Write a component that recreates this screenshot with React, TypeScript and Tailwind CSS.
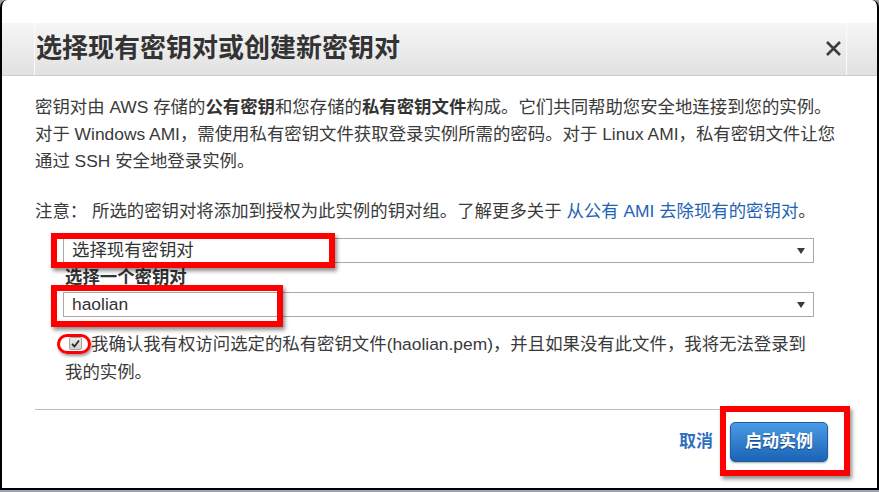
import React from "react";

const FONT = {
  fontFamily: '"Liberation Sans", "Noto Sans CJK SC", sans-serif',
};

function Arrow() {
  return (
    <svg width="8" height="6" viewBox="0 0 8 6" className="shrink-0">
      <path d="M0 0 L8 0 L4 6 Z" fill="#3a3a3a" />
    </svg>
  );
}

function Select({ value }: { value: string }) {
  return (
    <div className="h-[25px] border border-[#a9a9a9] bg-white flex items-center justify-between pl-[8px] pr-[8px] text-[17.4px] text-[#333] leading-none">
      <span>{value}</span>
      <Arrow />
    </div>
  );
}

export default function App() {
  return (
    <div
      className="relative w-[879px] h-[492px] bg-[#9aa3ab] overflow-hidden"
      style={FONT}
    >
      <div className="w-[879px] h-[490px] border-x-2 border-b-2 border-black rounded-t-[7px] bg-white pt-[23px] flex flex-col">
        {/* header */}
        <div className="h-[53px] shrink-0 border-b border-[#cccccc] bg-linear-to-b from-[#f6f6f6] to-[#e1e1e1]">
          <div className="ml-[32px] w-[813px] h-full border-l border-r border-[#fbfbfb] flex items-center justify-between pr-[4px]">
            <h1 className="text-[26px] font-bold text-[#333] leading-none pl-[1px] -mt-[2px]">
              选择现有密钥对或创建新密钥对
            </h1>
            <svg width="17" height="17" viewBox="0 0 17 17" className="-mt-[1px]">
              <path
                d="M2 2 L15 15 M15 2 L2 15"
                stroke="#3d3d3d"
                strokeWidth="2.6"
                strokeLinecap="butt"
              />
            </svg>
          </div>
        </div>

        {/* body */}
        <div className="pl-[33px] pr-[31px] text-[17.4px] text-[#3a3a3a] flex flex-col">
          <p className="mt-[18px] leading-[27px] whitespace-nowrap">
            密钥对由 AWS 存储的<b className="text-[#333]">公有密钥</b>和您存储的
            <b className="text-[#333]">私有密钥文件</b>构成。它们共同帮助您安全地连接到您的实例。
            <br />
            对于 Windows AMI，需使用私有密钥文件获取登录实例所需的密码。对于 Linux AMI，私有密钥文件让您
            <br />
            通过 SSH 安全地登录实例。
          </p>
          <p className="mt-[23px] leading-[27px] whitespace-nowrap">
            注意： 所选的密钥对将添加到授权为此实例的钥对组。了解更多关于{" "}
            <span className="text-[#1f63b3]">从公有 AMI 去除现有的密钥对</span>。
          </p>

          <div className="mt-[13px] ml-[28px] w-[751px] flex flex-col">
            <Select value="选择现有密钥对" />
            <div className="h-[29px] leading-[29px] font-bold text-[#333] pl-[2px]">
              选择一个密钥对
            </div>
            <Select value="haolian" />
            <p className="mt-[13px] leading-[28px] pl-[2px] whitespace-nowrap">
              <span className="inline-flex align-middle ml-[4px] mr-[9px] -mt-[4px] w-[13px] h-[13px] border border-[#a5a5a5] rounded-[2px] bg-linear-to-b from-[#ececec] to-[#d2d2d2] items-center justify-center">
                <svg width="9" height="9" viewBox="0 0 9 9">
                  <path
                    d="M1 5 L3.5 7.5 L8 1.5"
                    stroke="#2a2a2a"
                    strokeWidth="1.8"
                    fill="none"
                  />
                </svg>
              </span>
              我确认我有权访问选定的私有密钥文件(haolian.pem)，并且如果没有此文件，我将无法登录到
              <br />
              我的实例。
            </p>
          </div>

          <div className="mt-[23px] h-px bg-[#bdbdbd]" />

          <div className="flex justify-end items-center pt-[12px] pr-[18px]">
            <span className="font-bold text-[17px] text-[#2f6fc2] mr-[17px]">取消</span>
            <button className="h-[40px] w-[98px] rounded-[5px] border border-[#1c5ea8] bg-linear-to-b from-[#4b9be6] to-[#1a63b6] text-white font-bold text-[17px] shadow-[0_1px_2px_rgba(0,0,0,0.35)] [text-shadow:0_1px_1px_rgba(0,0,0,0.4)]">
              启动实例
            </button>
          </div>
        </div>
      </div>

      {/* red annotation overlays */}
      <div className="absolute left-[51px] top-[233px] w-[284px] h-[35px] border-[6px] border-[#ff0000] shadow-[2px_3px_4px_rgba(0,0,0,0.45)]" />
      <div className="absolute left-[51px] top-[285px] w-[232px] h-[42px] border-[6px] border-[#ff0000] shadow-[2px_3px_4px_rgba(0,0,0,0.45)]" />
      <div className="absolute left-[57px] top-[334px] w-[34px] h-[20px] rounded-full border-[3px] border-[#ff0000] shadow-[1px_2px_3px_rgba(0,0,0,0.4)]" />
      <div className="absolute left-[720px] top-[406px] w-[130px] h-[70px] border-[6px] border-[#ff0000] shadow-[2px_3px_4px_rgba(0,0,0,0.45)]" />
    </div>
  );
}
